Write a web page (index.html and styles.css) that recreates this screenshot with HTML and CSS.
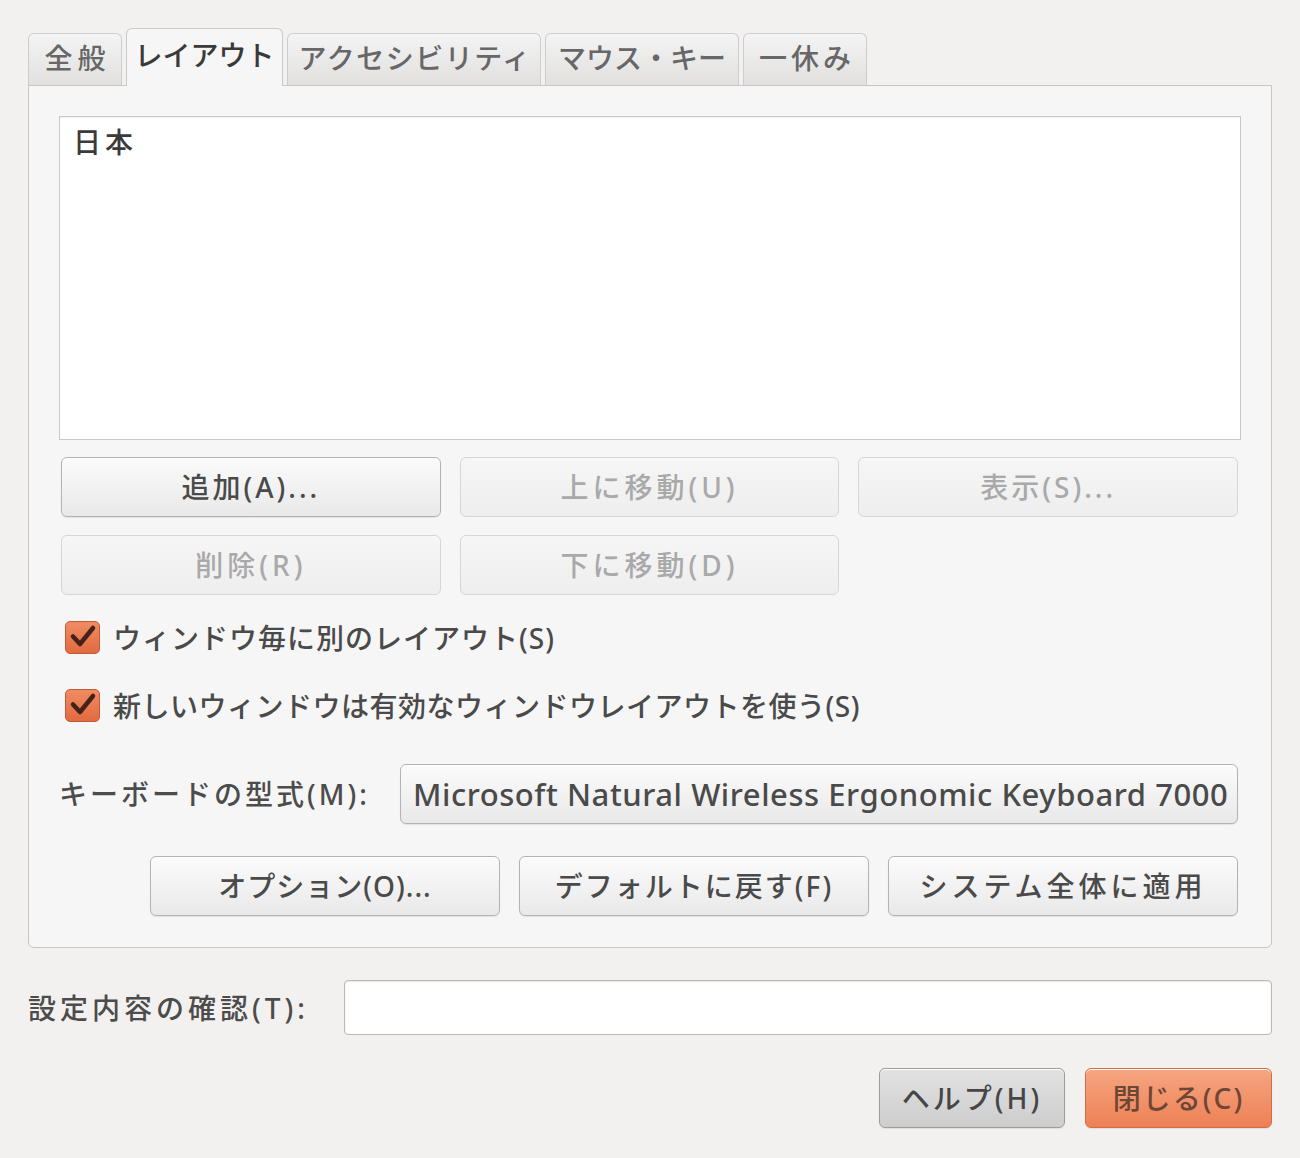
FILE: index.html
```html
<!DOCTYPE html>
<html lang="ja">
<head>
<meta charset="utf-8">
<title>キーボードの設定</title>
<link rel="stylesheet" href="styles.css">
</head>
<body>
<div class="dialog">
  <div class="tabs">
    <div class="tab tab-general">全般</div>
    <div class="tab tab-layout active">レイアウト</div>
    <div class="tab tab-access">アクセシビリティ</div>
    <div class="tab tab-mouse">マウス・キー</div>
    <div class="tab tab-break">一休み</div>
  </div>
  <div class="notebook">
    <div class="list">
      <div class="list-item ls-k">日本</div>
    </div>
    <div class="btn-grid">
      <div class="btn ls-m">追加(A)...</div>
      <div class="btn disabled ls-k">上に移動(U)</div>
      <div class="btn disabled ls-m">表示(S)...</div>
      <div class="btn disabled ls-k">削除(R)</div>
      <div class="btn disabled ls-k">下に移動(D)</div>
    </div>
    <div class="checks">
      <div class="check-row">
        <span class="checkbox"><svg viewBox="0 0 35 33" width="35" height="33"><path d="M8 15.5 L15 23 L28 7" fill="none" stroke="#45221a" stroke-width="4.5" stroke-linecap="round" stroke-linejoin="round"/></svg></span>
        <span class="check-label ls-n">ウィンドウ毎に別のレイアウト(S)</span>
      </div>
      <div class="check-row">
        <span class="checkbox"><svg viewBox="0 0 35 33" width="35" height="33"><path d="M8 15.5 L15 23 L28 7" fill="none" stroke="#45221a" stroke-width="4.5" stroke-linecap="round" stroke-linejoin="round"/></svg></span>
        <span class="check-label ls-s">新しいウィンドウは有効なウィンドウレイアウトを使う(S)</span>
      </div>
    </div>
    <div class="kbd-row">
      <div class="label ls-m">キーボードの型式(M):</div>
      <div class="btn combo">Microsoft Natural Wireless Ergonomic Keyboard 7000</div>
    </div>
    <div class="action-row">
      <div class="btn wide ls-n">オプション(O)...</div>
      <div class="btn wide ls-w">デフォルトに戻す(F)</div>
      <div class="btn wide ls-k">システム全体に適用</div>
    </div>
  </div>
  <div class="test-row">
    <div class="label ls-k">設定内容の確認(T):</div>
    <div class="entry"></div>
  </div>
  <div class="dialog-buttons">
    <div class="btn help ls-m">ヘルプ(H)</div>
    <div class="btn close ls-w">閉じる(C)</div>
  </div>
</div>
</body>
</html>
```
FILE: styles.css
```css
html, body {
  margin: 0;
  padding: 0;
  background: #f2f1f0;
}
body {
  font-family: "Noto Sans", "Noto Sans CJK JP", sans-serif;
  font-size: 28px;
  font-weight: 500;
  color: #4a4a4a;
}
.ls-k { letter-spacing: 4px; }
.ls-m { letter-spacing: 3px; }
.ls-w { letter-spacing: 2px; }
.ls-n { letter-spacing: 1px; }
.ls-s { letter-spacing: 0.5px; }

.dialog {
  width: 1300px;
  height: 1158px;
  box-sizing: border-box;
  padding: 28px 28px 0 28px;
}
.tabs {
  display: flex;
  align-items: flex-end;
  height: 57px;
  gap: 4px;
  position: relative;
  z-index: 1;
}
.tab {
  height: 52px;
  box-sizing: border-box;
  padding: 0 0 3px 0;
  border: 1px solid #cdcdcd;
  border-bottom: none;
  border-radius: 6px 6px 0 0;
  background: linear-gradient(#f4f4f4, #e1e0df);
  color: #676767;
  display: flex;
  align-items: center;
  justify-content: center;
  line-height: 1;
}
.tab-general { width: 94px; letter-spacing: 5px; padding-left: 5px; }
.tab-layout { width: 157px; }
.tab-access { width: 254px; letter-spacing: 1.5px; padding-left: 2px; }
.tab-mouse { width: 194px; }
.tab-break { width: 124px; letter-spacing: 4px; padding-left: 4px; }
.tab.active {
  height: 58px;
  margin-bottom: -1px;
  background: #f6f6f6;
  color: #3a3a3a;
  border-color: #c9c9c9;
  padding-bottom: 5px;
}
.notebook {
  border: 1px solid #c6c6c6;
  border-radius: 0 0 6px 6px;
  background: #f6f6f6;
  height: 863px;
  box-sizing: border-box;
  padding: 30px 30px 0 30px;
  display: flex;
  flex-direction: column;
}
.list {
  height: 324px;
  box-sizing: border-box;
  background: #ffffff;
  border: 1px solid #c9c9c9;
  box-shadow: inset 0 1px 1px rgba(0,0,0,0.06);
  padding: 6px 13px;
}
.list-item {
  color: #3a3a3a;
  line-height: 38px;
}
.btn {
  box-sizing: border-box;
  height: 60px;
  border: 1px solid #b3b3b3;
  border-radius: 6px;
  background: linear-gradient(#fbfbfb, #e9e9e9);
  box-shadow: 0 1px 1px rgba(0,0,0,0.08), inset 0 1px 0 #ffffff;
  display: flex;
  align-items: center;
  justify-content: center;
  color: #4a4a4a;
  white-space: nowrap;
  line-height: 1;
}
.btn.disabled {
  border-color: #d6d6d6;
  background: linear-gradient(#f6f6f6, #eeeeee);
  box-shadow: none;
  color: #a9a9a9;
}
.btn-grid {
  display: grid;
  grid-template-columns: repeat(3, 1fr);
  column-gap: 19px;
  row-gap: 18px;
  margin: 17px 3px 0 2px;
}
.checks {
  display: flex;
  flex-direction: column;
  gap: 35px;
  margin-top: 26px;
  padding-left: 6px;
}
.check-row {
  display: flex;
  align-items: center;
  gap: 13px;
  height: 33px;
}
.checkbox {
  width: 35px;
  height: 33px;
  box-sizing: border-box;
  border: 1px solid #c15a36;
  border-radius: 5px;
  background: linear-gradient(#f08c63, #e26a40);
  display: block;
  flex: none;
}
.checkbox svg {
  display: block;
  margin: -1px;
}
.check-label {
  color: #4a4a4a;
  line-height: 1;
}
.kbd-row {
  display: grid;
  grid-template-columns: 341px 1fr;
  align-items: center;
  margin-top: 42px;
  padding-right: 3px;
}
.label {
  color: #4c4c4c;
  line-height: 1;
}
.combo {
  justify-content: flex-start;
  padding-left: 12px;
  font-size: 31px;
  letter-spacing: 0.55px;
}
.action-row {
  display: flex;
  justify-content: flex-end;
  gap: 19px;
  margin-top: 32px;
  padding-right: 3px;
}
.btn.wide {
  width: 350px;
}
.test-row {
  display: grid;
  grid-template-columns: 316px 1fr;
  align-items: center;
  margin-top: 32px;
}
.entry {
  height: 55px;
  box-sizing: border-box;
  background: #ffffff;
  border: 1px solid #b9b9b9;
  border-radius: 4px;
  box-shadow: inset 0 1px 2px rgba(0,0,0,0.1);
}
.dialog-buttons {
  display: flex;
  justify-content: flex-end;
  gap: 20px;
  margin-top: 33px;
}
.btn.help {
  width: 186px;
  background: linear-gradient(#e2e2e2, #cdcdcd);
  border-color: #9d9d9d;
  color: #464646;
}
.btn.close {
  width: 187px;
  background: linear-gradient(#f6a681, #ee8055);
  border-color: #cf6d46;
  color: #6e4636;
}
```
